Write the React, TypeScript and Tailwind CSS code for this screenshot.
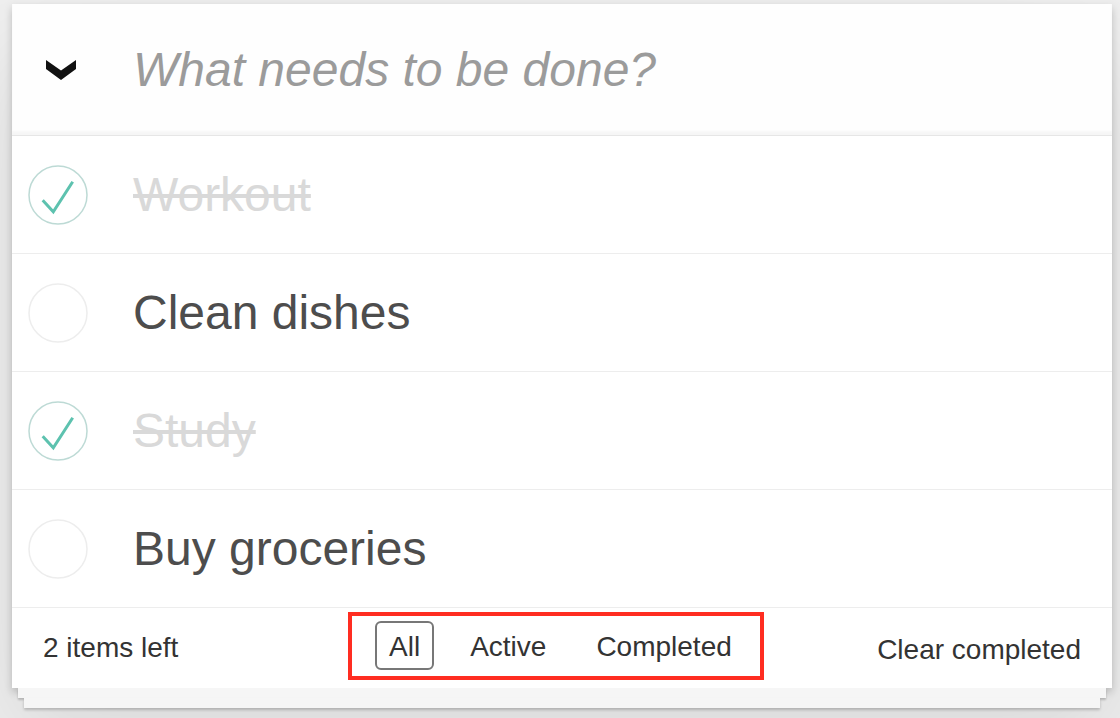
const todos = [
  { title: 'Workout', done: true },
  { title: 'Clean dishes', done: false },
  { title: 'Study', done: true },
  { title: 'Buy groceries', done: false },
];

function Toggle({ done }: { done: boolean }) {
  return (
    <svg width="60" height="60" viewBox="0 0 60 60" className="shrink-0">
      <circle cx="30" cy="30" r="29" fill="none" stroke={done ? '#bddad5' : '#ededed'} strokeWidth="1.5" />
      {done && (
        <polyline
          points="14.7,35.3 25.3,46.7 44.7,16.7"
          fill="none"
          stroke="#5dc2af"
          strokeWidth="3"
        />
      )}
    </svg>
  );
}

function TodoItem({ title, done }: { title: string; done: boolean }) {
  return (
    <li className="flex h-[118px] items-center border-b border-[#ededed] pl-[16px]">
      <Toggle done={done} />
      <span
        className={
          done
            ? 'ml-[45px] text-[48px] leading-none text-[#d9d9d9] line-through'
            : 'ml-[45px] text-[48px] leading-none text-[#4d4d4d]'
        }
      >
        {title}
      </span>
    </li>
  );
}

export default function App() {
  return (
    <div className="h-[718px] bg-[#efefef] pt-[4px] pl-[12px] font-['Liberation_Sans',Arial,sans-serif]">
      <div className="w-[1100px] bg-white shadow-[0_4px_8px_0_rgba(0,0,0,0.2),0_50px_100px_0_rgba(0,0,0,0.1)]">
        {/* new todo input */}
        <header className="flex h-[131px] items-center bg-[#fefefe] shadow-[inset_0_-4px_2px_rgba(0,0,0,0.03)]">
          <div className="flex w-[121px] pl-[33px] pt-[3px]">
            <svg width="32" height="22" viewBox="0 0 32 22">
              <polygon points="1,0 16,10.5 31,0 31,9 16,20 1,9" fill="#111" />
            </svg>
          </div>
          <span className="text-[48px] italic font-light leading-none text-[#9b9b9b]">What needs to be done?</span>
        </header>

        <ul className="border-t border-[#e6e6e6]">
          {todos.map((t) => (
            <TodoItem key={t.title} title={t.title} done={t.done} />
          ))}
        </ul>

        <footer className="flex h-[80px] items-center pl-[31px] pr-[31px] text-[28px] font-light text-[#333]">
          <span className="w-[305px]">2 items left</span>
          <ul className="flex gap-[22px] self-start mt-[4px] border-4 border-[#ff2d21] pl-[23px] pr-[14px] pt-[5px] pb-[6px]">
            <li className="flex h-[49px] items-center rounded-[6px] border-2 border-[#777] px-[12px] pt-[2px]">All</li>
            <li className="flex h-[49px] items-center rounded-[6px] border-2 border-transparent px-[12px] pt-[2px]">Active</li>
            <li className="flex h-[49px] items-center rounded-[6px] border-2 border-transparent px-[12px] pt-[2px]">Completed</li>
          </ul>
          <span className="ml-auto pt-[3px]">Clear completed</span>
        </footer>
      </div>
      {/* stacked page edges */}
      <div className="mx-[6px] w-[1088px] h-[10px] bg-[#f6f6f6] shadow-[0_2px_2px_rgba(0,0,0,0.2)]" />
      <div className="mx-[12px] w-[1076px] h-[10px] bg-[#f6f6f6] shadow-[0_2px_3px_rgba(0,0,0,0.2)]" />
    </div>
  );
}
